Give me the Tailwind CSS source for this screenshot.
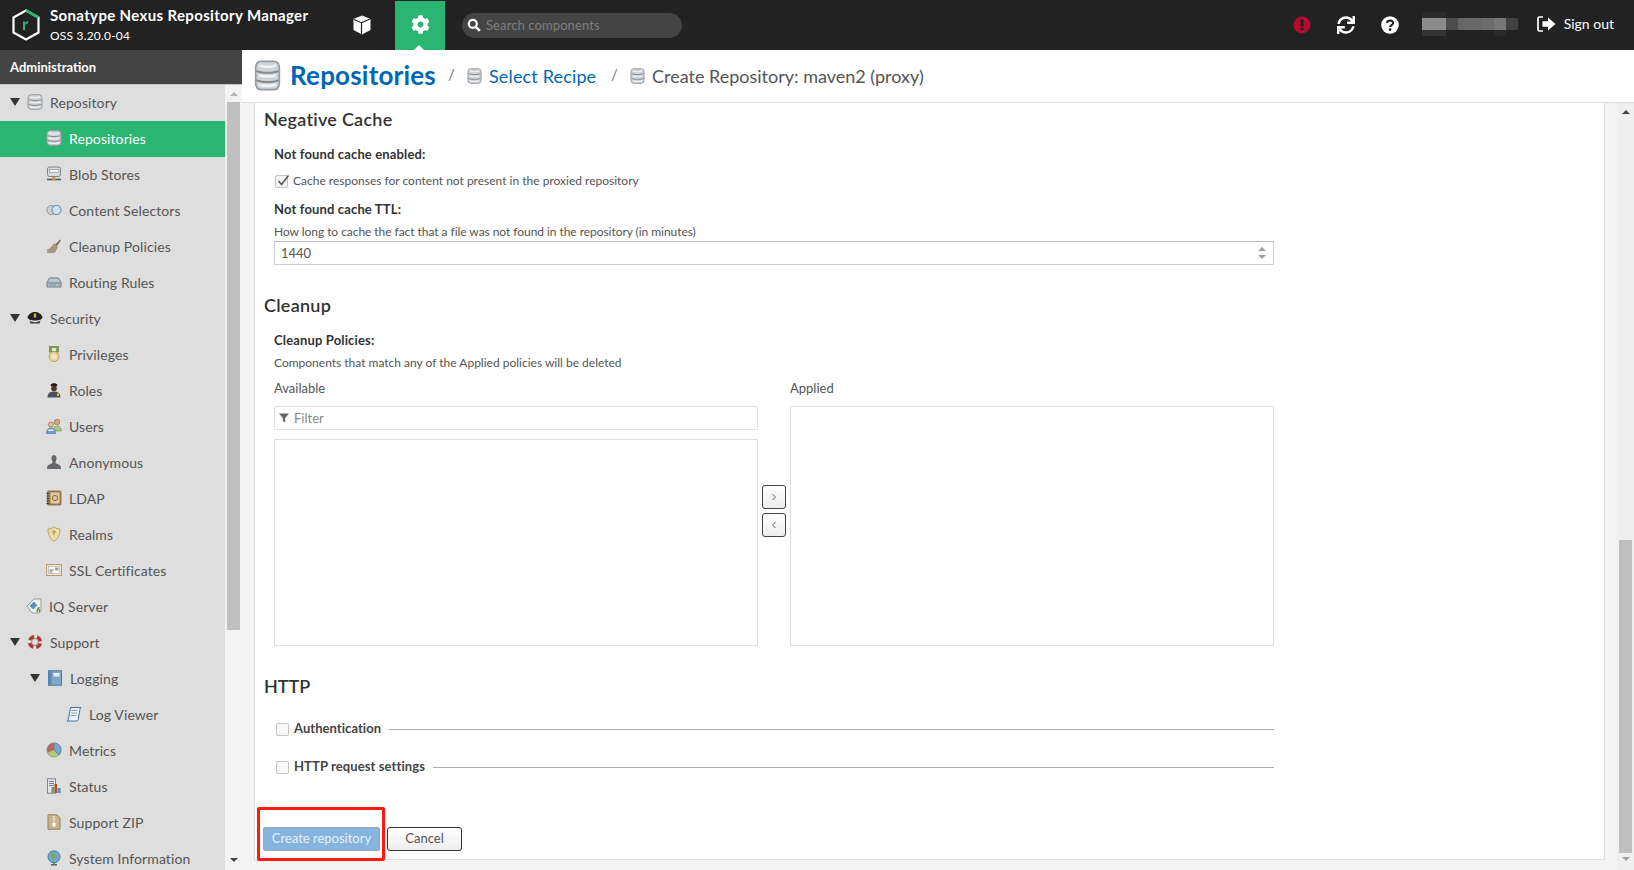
<!DOCTYPE html>
<html>
<head>
<meta charset="utf-8">
<script src="https://cdn.jsdelivr.net/npm/@tailwindcss/browser@4"></script>
</head>
<body class="m-0 font-['Lato','Liberation_Sans',sans-serif] bg-white">
<svg class="hidden">
  <symbol id="db" viewBox="0 0 16 16" preserveAspectRatio="none"><rect x="1" y=".7" width="14" height="14.600" rx="3" fill="#cfd3d6" stroke="#969ca2"/><path d="M1.500 5.600c2.500 1.300 10.500 1.300 13 0M1.500 10.400c2.500 1.300 10.500 1.300 13 0" stroke="#858b91" fill="none"/><path d="M3 2.800c2.500 1 7.500 1 10 0M3 7.800c2.500 1 7.500 1 10 0M3 12.600c2.500 1 7.500 1 10 0" stroke="#f2f3f4" stroke-width="1.300" fill="none"/></symbol>
  <symbol id="blob" viewBox="0 0 16 16"><rect x="1.500" y="1" width="13" height="9.500" rx="2" fill="#d8dadc" stroke="#7d8287"/><rect x="3.500" y="3.500" width="9" height="3" fill="#f3f3f3" stroke="#8a8f94" stroke-width=".6"/><path d="M1 13.500h14" stroke="#55585c" stroke-width="1.600"/><rect x="6.500" y="11" width="3" height="3.500" fill="#c79a4a"/></symbol>
  <symbol id="sel" viewBox="0 0 16 16"><circle cx="5.500" cy="8" r="4.600" fill="#cfd2d5" stroke="#8e9398"/><circle cx="10.500" cy="8" r="4.600" fill="#cfe0ee" stroke="#5f87ad"/></symbol>
  <symbol id="broom" viewBox="0 0 16 16"><path d="M9 7l5-5.500 1 1L10.500 8.500z" fill="#7a6a52"/><path d="M8.500 5.500l3 3-2.500 5.500c-2 .5-6 .8-8 .2 1.500-.7 2.500-1.200 2.700-2-1 .2-2 .2-2.700-.2 1.800-.5 3.500-1.500 4.500-3z" fill="#a8977a" stroke="#85755c" stroke-width=".5"/></symbol>
  <symbol id="router" viewBox="0 0 16 16"><path d="M3.500 4h9L15 8.500v4.500H1V8.500z" fill="#b9c6d2" stroke="#6f7d8a"/><path d="M1.500 9h13" stroke="#6f7d8a"/><path d="M3 11h7" stroke="#5c6670" stroke-dasharray="1 .6" stroke-width="1.200"/><path d="M12 11h2" stroke="#6bb04a" stroke-width="1.200"/></symbol>
  <symbol id="cap" viewBox="0 0 16 16"><path d="M.5 7c1-3 4.500-5 7.500-5s6.500 2 7.500 5c0 2.500-3.500 3.500-7.500 3.500S.5 9.500.5 7z" fill="#222"/><path d="M2.500 10.500c3 2.200 8 2.200 11 0l-1 3H3.500z" fill="#3a3a3a"/><rect x="6.800" y="3.500" width="2.400" height="4" fill="#d9b44a"/></symbol>
  <symbol id="medal" viewBox="0 0 16 16"><rect x="3.500" y="0.500" width="9" height="5.500" fill="#7ea55c" stroke="#5f8243" stroke-width=".7"/><rect x="6" y="2" width="4" height="3" fill="#dfe8c8"/><circle cx="8" cy="10.500" r="5" fill="#e6d59a" stroke="#b9a25e"/><circle cx="8" cy="10.500" r="2.500" fill="#f1e7bf"/></symbol>
  <symbol id="officer" viewBox="0 0 16 16"><path d="M4.500 3c1-2.500 6-2.500 7 0l-1 1.500h-5z" fill="#1d1d1d"/><circle cx="8" cy="6.500" r="2.800" fill="#4f3524"/><path d="M1.500 15.500c0-4.500 3-6 6.500-6s6.500 1.500 6.500 6z" fill="#4c5056"/><rect x="11" y="11.500" width="2" height="2.500" fill="#e4c24f"/></symbol>
  <symbol id="users" viewBox="0 0 16 16"><circle cx="11" cy="4" r="2.800" fill="#d7a679" stroke="#8c5f3b" stroke-width=".6"/><path d="M7 13c0-3.500 2-5 4-5s4.500 1.500 4.500 5z" fill="#a9c58c" stroke="#71914f" stroke-width=".6"/><circle cx="5" cy="6.500" r="2.600" fill="#e4b88f" stroke="#8c5f3b" stroke-width=".6"/><path d="M.5 15.500c0-4 2-5.500 4.500-5.500s4.500 1.500 4.500 5.500z" fill="#6f9fcb" stroke="#3f6f9f" stroke-width=".6"/><rect x="2.500" y="11.500" width="5" height="1.500" fill="#f0f4f8"/></symbol>
  <symbol id="anon" viewBox="0 0 16 16"><path d="M5.500 4c0-4 5-4 5 0 0 2-1 3.500-1 5l4 2c1 .6 1.500 2 1.500 4H1c0-2 .5-3.400 1.500-4l4-2c0-1.500-1-3-1-5z" fill="#66686b"/></symbol>
  <symbol id="book" viewBox="0 0 16 16"><rect x="1.500" y="1" width="13.500" height="14" rx="1" fill="#a98250" stroke="#72542d" stroke-width=".7"/><rect x="4.500" y="2.500" width="9" height="11" fill="#dcc8a4"/><circle cx="9" cy="8" r="2.600" fill="none" stroke="#8a6a3c"/><path d="M.5 3.500h3M.5 6h3M.5 8.500h3M.5 11h3M.5 13.500h3" stroke="#3f3f3f"/></symbol>
  <symbol id="shield" viewBox="0 0 16 16"><path d="M8 .8c1.800 1.400 3.800 2 6 2.200 0 5.500-1.500 9.500-6 12.200C3.500 12.500 2 8.500 2 3c2.200-.2 4.200-.8 6-2.200z" fill="#ecdca9" stroke="#bba465"/><path d="M8 4v5m-2-2.500c0-1 4-1 4 0" stroke="#a98f49" fill="none"/></symbol>
  <symbol id="cert" viewBox="0 0 16 16"><rect x=".5" y="2.500" width="15" height="11" fill="#efe6d0" stroke="#b39d72"/><rect x="2.500" y="4.500" width="11" height="7" fill="#f9f7f1" stroke="#9d9d9d" stroke-width=".5"/><path d="M3.500 8h4M3.500 10h3" stroke="#777"/><rect x="9" y="5.500" width="3.500" height="3" fill="#8fa9c4"/></symbol>
  <symbol id="tag" viewBox="0 0 16 16"><path d="M1 8l7-7h7v12l-2 2H6z" fill="#eef0ec" stroke="#9a9d97"/><rect x="4.500" y="5" width="6" height="5" transform="rotate(-45 7.500 7.500)" fill="#5f8fc0"/><path d="M11 14l2-5" stroke="#7b9d48" stroke-width="2"/><path d="M13.500 14v-3" stroke="#c7663a"/></symbol>
  <symbol id="buoy" viewBox="0 0 16 16"><circle cx="8" cy="8" r="7.500" fill="#c9c9c9"/><circle cx="8" cy="8" r="5.300" fill="none" stroke="#a63a34" stroke-width="3.600"/><circle cx="8" cy="8" r="5.300" fill="none" stroke="#ece8e4" stroke-width="3.600" stroke-dasharray="2.800 5.530" stroke-dashoffset="1.400"/><circle cx="8" cy="8" r="3.300" fill="#dedede" stroke="#8f5a56" stroke-width=".5"/></symbol>
  <symbol id="logbook" viewBox="0 0 16 16"><rect x="1.500" y=".8" width="13" height="14.400" fill="#7ea7cb" stroke="#4b7aa4"/><rect x="1.500" y=".8" width="3" height="14.400" fill="#5c89b2"/><rect x="6.500" y="3" width="6" height="3.500" fill="#e7eff6"/></symbol>
  <symbol id="scroll" viewBox="0 0 16 16"><path d="M4.500 1.500h10.500c-1 1-1.200 2-1.300 3l-1.500 9c-.2 1-1 1.500-2 1.500H1c1-.5 1.300-1.200 1.500-2z" fill="#eef3f7" stroke="#3f739e"/><path d="M5.500 4.500h6M5 7h6M4.600 9.500h6" stroke="#6a8aa5" stroke-width=".8"/></symbol>
  <symbol id="pie" viewBox="0 0 16 16"><circle cx="8" cy="8" r="7" fill="#b3c77f" stroke="#7d8f52" stroke-width=".7"/><path d="M8 8V1A7 7 0 0 0 1.500 10.500z" fill="#b9665c"/><path d="M8 8V1a7 7 0 0 1 5 12z" fill="#79a7c9" stroke="#4a7698" stroke-width=".6"/></symbol>
  <symbol id="status" viewBox="0 0 16 16"><rect x="1.500" y=".8" width="8" height="14.400" fill="#e3e5e8" stroke="#81878d"/><path d="M3 3.500h5M3 5.500h5M3 7.500h5" stroke="#7a8087"/><rect x="5.500" y="9" width="2.500" height="6" fill="#6ba04a"/><rect x="8.500" y="6" width="2.500" height="9" fill="#b0473d"/><rect x="11.500" y="10" width="3" height="5" fill="#4e8cbc"/></symbol>
  <symbol id="zip" viewBox="0 0 16 16"><path d="M2 .8h9l3 3v11.400H2z" fill="#c9b389" stroke="#94805a"/><path d="M8 2v7" stroke="#fff" stroke-width="1.400" stroke-dasharray="1.300 .8"/><rect x="6.500" y="9" width="3" height="3.500" fill="#fff"/></symbol>
  <symbol id="globe" viewBox="0 0 16 16"><circle cx="8" cy="6.800" r="6" fill="#6fa7cf" stroke="#4a7da3"/><path d="M5 2.500c2-1 4 .5 3.500 2-.5 1 1.500 1 2 2.500.4 1.500-1 3-2.500 3-.5-1.500-2-2-2.500-3.500C5 5.500 4 4 5 2.500z" fill="#7eab52"/><path d="M5 14.800h6" stroke="#63676b" stroke-width="1.600"/><path d="M8 12.800v2" stroke="#63676b" stroke-width="1.500"/></symbol>
  <symbol id="tri" viewBox="0 0 10 8"><path d="M0 0h10L5 8z" fill="#333"/></symbol>
</svg>

<div class="w-[1634px] h-[870px] overflow-hidden flex flex-col">
  <!-- top bar -->
  <header class="h-[50px] shrink-0 bg-[#222222] flex items-center relative">
    <svg class="ml-[12px] w-[28px] h-[32px] shrink-0" viewBox="0 0 28 32"><path d="M14 1.500L26.500 8.500V23.500L14 30.500L1.500 23.500V8.500z" fill="none" stroke="#fff" stroke-width="2.200"/><path d="M14 1.500L26.500 8.500" stroke="#29b473" stroke-width="2.600" fill="none"/><path d="M11 21v-8.500h2v1.500c.8-1.200 1.800-1.700 3.200-1.700v2.200c-1.800 0-3.200.5-3.200 2.500v4z" fill="#29b473"/></svg>
    <div class="ml-[10px] -mt-[2px] w-[302px] shrink-0 flex flex-col">
      <div class="text-white text-[15px] font-bold leading-[18px] tracking-[0.35px] whitespace-nowrap">Sonatype Nexus Repository Manager</div>
      <div class="text-white text-[12px] leading-[14px] mt-[5px] tracking-[0.2px]">OSS 3.20.0-04</div>
    </div>
    <svg class="w-[20px] h-[20px] shrink-0 -mt-px" viewBox="0 0 20 20"><path d="M10 .5l8.500 3.500v11L10 19.500 1.500 15V4z" fill="#fff"/><path d="M2 4.500l7.500 3.300V19M9.500 7.800L18 4" stroke="#222" stroke-width="1.200" fill="none"/></svg>
    <div class="ml-[23px] w-[50px] h-[49px] mt-px bg-[#2ab573] flex items-center justify-center relative shrink-0">
      <svg class="w-[19px] h-[19px] -mt-[2px]" viewBox="0 0 512 512"><path fill="#fff" d="M487.4 315.700l-42.600-24.600c4.300-23.200 4.300-47 0-70.200l42.600-24.600c4.900-2.800 7.100-8.600 5.500-14-11.100-35.600-30-67.800-54.700-94.600-3.800-4.100-10-5.100-14.800-2.300L380.800 110c-17.900-15.400-38.500-27.300-60.800-35.100V25.800c0-5.600-3.900-10.500-9.400-11.700-36.700-8.200-74.300-7.800-109.200 0-5.500 1.200-9.400 6.100-9.400 11.700V75c-22.200 7.900-42.800 19.800-60.800 35.100L88.700 85.500c-4.900-2.800-11-1.900-14.800 2.300-24.700 26.700-43.600 58.900-54.700 94.600-1.700 5.400.6 11.200 5.500 14L67.300 221c-4.300 23.200-4.300 47 0 70.200l-42.600 24.600c-4.900 2.800-7.100 8.600-5.500 14 11.100 35.600 30 67.800 54.700 94.600 3.800 4.100 10 5.100 14.800 2.300l42.600-24.600c17.900 15.400 38.500 27.300 60.800 35.100v49.200c0 5.600 3.900 10.500 9.400 11.700 36.700 8.200 74.300 7.800 109.200 0 5.500-1.200 9.400-6.100 9.400-11.700v-49.200c22.200-7.900 42.800-19.800 60.800-35.100l42.600 24.600c4.900 2.800 11 1.900 14.800-2.300 24.700-26.700 43.600-58.900 54.700-94.600 1.500-5.500-.7-11.300-5.600-14.100zM256 336c-44.100 0-80-35.900-80-80s35.900-80 80-80 80 35.900 80 80-35.900 80-80 80z"/></svg>
      <div class="absolute bottom-0 left-[19px] w-0 h-0 border-l-[5px] border-r-[5px] border-b-[5px] border-l-transparent border-r-transparent border-b-white"></div>
    </div>
    <div class="ml-[17px] w-[220px] h-[25px] rounded-full bg-[#444444] flex items-center shrink-0">
      <svg class="ml-[5px] w-[14px] h-[14px]" viewBox="0 0 14 14"><circle cx="5.800" cy="5.800" r="4" fill="none" stroke="#fff" stroke-width="2.200"/><path d="M8.800 8.800l4 4" stroke="#fff" stroke-width="2.600"/></svg>
      <span class="ml-[5px] pt-[2px] text-[13px] text-[#7d7d7d] tracking-[0.1px]">Search components</span>
    </div>
    <div class="ml-auto flex items-center">
      <svg class="w-[18px] h-[18px]" viewBox="0 0 18 18"><circle cx="9" cy="9" r="8.500" fill="#b8082e"/><rect x="7.400" y="3.500" width="3.200" height="7" rx=".8" fill="#222"/><circle cx="9" cy="13" r="1.700" fill="#222"/></svg>
      <svg class="ml-[26px] w-[18px] h-[18px]" viewBox="0 0 512 512"><path fill="#fff" d="M440.650 12.570l4 82.770A247.160 247.160 0 0 0 255.830 8C134.730 8 33.910 94.920 12.290 209.820A12 12 0 0 0 24.090 224h49.050a12 12 0 0 0 11.670-9.260 175.910 175.910 0 0 1 317-56.940l-101.460-4.860a12 12 0 0 0-12.570 12v47.410a12 12 0 0 0 12 12H500a12 12 0 0 0 12-12V12a12 12 0 0 0-12-12h-47.370a12 12 0 0 0-11.980 12.570zM255.830 432a175.610 175.610 0 0 1-146-77.800l101.800 4.870a12 12 0 0 0 12.570-12v-47.400a12 12 0 0 0-12-12H12a12 12 0 0 0-12 12V500a12 12 0 0 0 12 12h47.350a12 12 0 0 0 12-12.600l-4.150-82.570A247.170 247.170 0 0 0 255.830 504c121.110 0 221.930-86.920 243.550-201.820a12 12 0 0 0-11.800-14.180h-49.050a12 12 0 0 0-11.670 9.260A175.860 175.860 0 0 1 255.830 432z"/></svg>
      <svg class="ml-[26px] w-[18px] h-[18px]" viewBox="0 0 18 18"><circle cx="9" cy="9" r="8.800" fill="#fff"/><path d="M5.900 6.900c.2-1.700 1.500-2.500 3.100-2.500 1.700 0 3.100 1 3.100 2.500 0 2.200-3 2.100-3 4.200" fill="none" stroke="#222" stroke-width="2"/><circle cx="9.100" cy="13.600" r="1.300" fill="#222"/></svg>
      <div class="ml-[23px] w-[96px] h-[26px] flex flex-col">
        <div class="h-[6px] w-[24px] bg-[#2b2b2b]"></div>
        <div class="h-[12px] flex">
          <div class="w-[24px] bg-[#8a8a8a]"></div><div class="w-[12px] bg-[#4d4d4d]"></div><div class="w-[12px] bg-[#666666]"></div><div class="w-[12px] bg-[#686868]"></div><div class="w-[12px] bg-[#6c6c6c]"></div><div class="w-[12px] bg-[#777777]"></div><div class="w-[12px] bg-[#414141]"></div>
        </div>
        <div class="h-[6px] flex"><div class="w-[24px] bg-[#333333]"></div><div class="w-[48px]"></div><div class="w-[12px] bg-[#2b2b2b]"></div></div>
      </div>
      <svg class="ml-[19px] -mt-[2px] w-[19px] h-[16px]" viewBox="0 0 19 16"><path d="M6 1H2.500C1.500 1 1 1.600 1 2.500v11c0 .9.500 1.500 1.500 1.500H6" fill="none" stroke="#fff" stroke-width="1.700"/><path d="M5.500 5.200h5.500V1.500L18.500 8 11 14.500v-3.700H5.500z" fill="#fff"/></svg>
      <span class="ml-[8px] -mt-[4px] mr-[20px] text-white text-[14px]">Sign out</span>
    </div>
  </header>

  <div class="flex flex-1 min-h-0">
    <!-- sidebar -->
    <aside class="w-[242px] shrink-0 flex flex-col bg-[#f3f3f3]">
      <div class="h-[35px] shrink-0 bg-[#444444] border-b border-[#c4c4c4] pl-[10px] pt-[2px] flex items-center text-white text-[13px] font-bold">Administration</div>
      <div class="flex flex-1 min-h-0">
        <nav class="w-[225px] shrink-0 bg-[#dedede] text-[14px] text-[#555555] tracking-[0.1px] overflow-hidden">
          <div class="h-9 pb-[2px] flex items-center pl-[10px]"><svg class="w-[10px] h-[8px]"><use href="#tri"/></svg><svg class="ml-[7px] w-4 h-4"><use href="#db"/></svg><span class="ml-[7px]">Repository</span></div>
          <div class="h-9 pb-[2px] flex items-center pl-[46px] bg-[#2ab573] text-white"><svg class="w-4 h-4"><use href="#db"/></svg><span class="ml-[7px]">Repositories</span></div>
          <div class="h-9 pb-[2px] flex items-center pl-[46px]"><svg class="w-4 h-4"><use href="#blob"/></svg><span class="ml-[7px]">Blob Stores</span></div>
          <div class="h-9 pb-[2px] flex items-center pl-[46px]"><svg class="w-4 h-4"><use href="#sel"/></svg><span class="ml-[7px]">Content Selectors</span></div>
          <div class="h-9 pb-[2px] flex items-center pl-[46px]"><svg class="w-4 h-4"><use href="#broom"/></svg><span class="ml-[7px]">Cleanup Policies</span></div>
          <div class="h-9 pb-[2px] flex items-center pl-[46px]"><svg class="w-4 h-4"><use href="#router"/></svg><span class="ml-[7px]">Routing Rules</span></div>
          <div class="h-9 pb-[2px] flex items-center pl-[10px]"><svg class="w-[10px] h-[8px]"><use href="#tri"/></svg><svg class="ml-[7px] w-4 h-4"><use href="#cap"/></svg><span class="ml-[7px]">Security</span></div>
          <div class="h-9 pb-[2px] flex items-center pl-[46px]"><svg class="w-4 h-4"><use href="#medal"/></svg><span class="ml-[7px]">Privileges</span></div>
          <div class="h-9 pb-[2px] flex items-center pl-[46px]"><svg class="w-4 h-4"><use href="#officer"/></svg><span class="ml-[7px]">Roles</span></div>
          <div class="h-9 pb-[2px] flex items-center pl-[46px]"><svg class="w-4 h-4"><use href="#users"/></svg><span class="ml-[7px]">Users</span></div>
          <div class="h-9 pb-[2px] flex items-center pl-[46px]"><svg class="w-4 h-4"><use href="#anon"/></svg><span class="ml-[7px]">Anonymous</span></div>
          <div class="h-9 pb-[2px] flex items-center pl-[46px]"><svg class="w-4 h-4"><use href="#book"/></svg><span class="ml-[7px]">LDAP</span></div>
          <div class="h-9 pb-[2px] flex items-center pl-[46px]"><svg class="w-4 h-4"><use href="#shield"/></svg><span class="ml-[7px]">Realms</span></div>
          <div class="h-9 pb-[2px] flex items-center pl-[46px]"><svg class="w-4 h-4"><use href="#cert"/></svg><span class="ml-[7px]">SSL Certificates</span></div>
          <div class="h-9 pb-[2px] flex items-center pl-[26px]"><svg class="w-4 h-4"><use href="#tag"/></svg><span class="ml-[7px]">IQ Server</span></div>
          <div class="h-9 pb-[2px] flex items-center pl-[10px]"><svg class="w-[10px] h-[8px]"><use href="#tri"/></svg><svg class="ml-[7px] w-4 h-4"><use href="#buoy"/></svg><span class="ml-[7px]">Support</span></div>
          <div class="h-9 pb-[2px] flex items-center pl-[30px]"><svg class="w-[10px] h-[8px]"><use href="#tri"/></svg><svg class="ml-[7px] w-4 h-4"><use href="#logbook"/></svg><span class="ml-[7px]">Logging</span></div>
          <div class="h-9 pb-[2px] flex items-center pl-[66px]"><svg class="w-4 h-4"><use href="#scroll"/></svg><span class="ml-[7px]">Log Viewer</span></div>
          <div class="h-9 pb-[2px] flex items-center pl-[46px]"><svg class="w-4 h-4"><use href="#pie"/></svg><span class="ml-[7px]">Metrics</span></div>
          <div class="h-9 pb-[2px] flex items-center pl-[46px]"><svg class="w-4 h-4"><use href="#status"/></svg><span class="ml-[7px]">Status</span></div>
          <div class="h-9 pb-[2px] flex items-center pl-[46px]"><svg class="w-4 h-4"><use href="#zip"/></svg><span class="ml-[7px]">Support ZIP</span></div>
          <div class="h-9 pb-[2px] flex items-center pl-[46px]"><svg class="w-4 h-4"><use href="#globe"/></svg><span class="ml-[7px]">System Information</span></div>
        </nav>
        <div class="w-[17px] shrink-0 flex flex-col items-center pl-[2px] pr-[2px]">
          <div class="h-[17px] flex items-center justify-center"><div class="w-0 h-0 border-l-[4px] border-r-[4px] border-b-[4px] border-l-transparent border-r-transparent border-b-[#b5b5b5]"></div></div>
          <div class="w-[13px] h-[528px] bg-[#bfbfbf]"></div>
          <div class="mt-auto h-[20px] flex items-center justify-center"><div class="w-0 h-0 border-l-[4px] border-r-[4px] border-t-[4px] border-l-transparent border-r-transparent border-t-[#444444]"></div></div>
        </div>
      </div>
    </aside>

    <!-- main -->
    <main class="flex-1 min-w-0 flex flex-col">
      <div class="h-[53px] shrink-0 bg-white border-b border-[#dddddd] flex items-center">
        <svg class="ml-[12px] w-[27px] h-[31px] -mt-[1px]"><use href="#db"/></svg>
        <span class="ml-[9px] text-[26px] font-bold text-[#0067b6] tracking-[0.2px] w-[158px] whitespace-nowrap -mt-[1px]">Repositories</span>
        <span class="text-[15px] text-[#777777] w-[19px] -mt-[4px]">/</span>
        <svg class="w-[15px] h-[16px]"><use href="#db"/></svg>
        <span class="ml-[7px] text-[18px] text-[#0067b6] tracking-[0.15px] w-[122px] whitespace-nowrap">Select Recipe</span>
        <span class="text-[15px] text-[#777777] w-[19px] -mt-[4px]">/</span>
        <svg class="w-[15px] h-[16px]"><use href="#db"/></svg>
        <span class="ml-[7px] text-[18px] text-[#555555] whitespace-nowrap">Create Repository: maven2 (proxy)</span>
      </div>
      <div class="flex-1 min-h-0 bg-[#f3f3f3] flex pl-[12px]">
        <section class="w-[1351px] h-[757px] shrink-0 bg-white border-l border-r border-b border-[#dddddd] pl-[9px] text-[#444444]">
          <h2 class="mt-[7px] h-[20px] pb-[2px] flex items-center text-[18px] font-semibold text-[#333333] tracking-[0.25px]">Negative Cache</h2>
          <div class="ml-[10px] w-[1000px]">
            <div class="mt-[16px] h-[16px] pt-[2px] flex items-center text-[13px] font-bold text-[#333333] tracking-[0.15px]">Not found cache enabled:</div>
            <div class="mt-[11px] h-[16px] flex items-center text-[12px] text-[#555555]">
              <div class="ml-[1px] w-[13px] h-[13px] border border-[#c4c4c4] rounded-[2px] bg-[#f5f5f5] relative">
                <svg class="absolute left-0 -top-[2px] w-[14px] h-[14px]" viewBox="0 0 14 14"><path d="M2.500 7l3 3.500L12.500 1.500" fill="none" stroke="#5a5a5a" stroke-width="1.600"/></svg>
              </div>
              <span class="ml-[5px]">Cache responses for content not present in the proxied repository</span>
            </div>
            <div class="mt-[12px] h-[16px] pt-[2px] flex items-center text-[13px] font-bold text-[#333333] tracking-[0.15px]">Not found cache TTL:</div>
            <div class="mt-[7px] h-[16px] flex items-center text-[12px] text-[#555555] tracking-[-0.05px]">How long to cache the fact that a file was not found in the repository (in minutes)</div>
            <div class="mt-[1px] h-[24px] border border-[#cfcfcf] border-t-[#b9b9b9] flex items-center pl-[6px] text-[13px] text-[#555555]">
              <span class="pt-[2px]">1440</span>
              <div class="ml-auto mr-[7px] flex flex-col gap-[4px]">
                <div class="w-0 h-0 border-l-[4px] border-r-[4px] border-b-[4px] border-l-transparent border-r-transparent border-b-[#a0a0a0]"></div>
                <div class="w-0 h-0 border-l-[4px] border-r-[4px] border-t-[4px] border-l-transparent border-r-transparent border-t-[#a0a0a0]"></div>
              </div>
            </div>
          </div>
          <h2 class="mt-[31px] h-[20px] pb-[1px] flex items-center text-[18px] font-semibold text-[#333333] tracking-[0.25px]">Cleanup</h2>
          <div class="ml-[10px] w-[1000px]">
            <div class="mt-[16px] h-[16px] pt-[2px] flex items-center text-[13px] font-bold text-[#333333] tracking-[0.15px]">Cleanup Policies:</div>
            <div class="mt-[7px] h-[16px] flex items-center text-[12px] text-[#555555]">Components that match any of the Applied policies will be deleted</div>
            <div class="mt-[9px] flex h-[266px]">
              <div class="w-[484px] flex flex-col">
                <div class="h-[16px] pt-[2px] flex items-center text-[13px] text-[#555555]">Available</div>
                <div class="mt-[10px] h-[24px] border border-[#dddddd] rounded-[2px] flex items-center pl-[4px] text-[13px] text-[#888888]">
                  <svg class="w-[10px] h-[10px]" viewBox="0 0 10 10"><path d="M0 .5h10L6.200 5v4.500L3.800 8V5z" fill="#666666"/></svg>
                  <span class="ml-[5px] pt-[2px]">Filter</span>
                </div>
                <div class="mt-[9px] flex-1 border border-[#dddddd]"></div>
              </div>
              <div class="w-[32px] flex flex-col items-center pt-[105px]">
                <button class="w-[24px] h-[24px] border border-[#444444] rounded-[3px] bg-gradient-to-b from-white to-[#eeeeee] flex items-center justify-center"><svg class="w-[8px] h-[8px]" viewBox="0 0 8 8"><path d="M2.500 1l3 3-3 3" fill="none" stroke="#666666"/></svg></button>
                <button class="mt-[4px] w-[24px] h-[24px] border border-[#444444] rounded-[3px] bg-gradient-to-b from-white to-[#eeeeee] flex items-center justify-center"><svg class="w-[8px] h-[8px]" viewBox="0 0 8 8"><path d="M5.500 1l-3 3 3 3" fill="none" stroke="#666666"/></svg></button>
              </div>
              <div class="w-[484px] flex flex-col">
                <div class="h-[16px] pt-[2px] flex items-center text-[13px] text-[#555555]">Applied</div>
                <div class="mt-[10px] flex-1 border border-[#dddddd]"></div>
              </div>
            </div>
          </div>
          <h2 class="mt-[31px] h-[20px] pb-[2px] flex items-center text-[18px] font-semibold text-[#333333]">HTTP</h2>
          <div class="ml-[12px] w-[998px]">
            <div class="mt-[24px] h-[16px] flex items-center text-[13px] font-bold text-[#444444] tracking-[0.05px]">
              <div class="w-[13px] h-[13px] border border-[#c4c4c4] rounded-[2px] bg-[#f8f8f8]"></div>
              <span class="ml-[5px] w-[95px] whitespace-nowrap">Authentication</span>
              <div class="flex-1 h-px bg-[#aaaaaa]"></div>
            </div>
            <div class="mt-[22px] h-[16px] flex items-center text-[13px] font-bold text-[#444444] tracking-[0.1px]">
              <div class="w-[13px] h-[13px] border border-[#c4c4c4] rounded-[2px] bg-[#f8f8f8]"></div>
              <span class="ml-[5px] w-[139px] whitespace-nowrap">HTTP request settings</span>
              <div class="flex-1 h-px bg-[#aaaaaa]"></div>
            </div>
          </div>
          <div class="mt-[52px] -ml-[1px] h-[24px] flex relative">
            <button class="w-[117px] h-[24px] border border-[#9aa7b3] rounded-[2px] bg-[#85b5de] text-[13px] text-[#e6eff7]">Create repository</button>
            <button class="ml-[7px] w-[75px] h-[24px] border border-[#333333] rounded-[3px] bg-gradient-to-b from-white to-[#eeeeee] text-[13px] text-[#555555]">Cancel</button>
            <div class="absolute -left-[6px] -top-[20px] w-[128px] h-[54px] border-[3px] border-[#ff1a10] rounded-[2px]"></div>
          </div>
        </section>
        <div class="flex-1 flex">
          <div class="w-[12px]"></div>
          <div class="flex-1 bg-[#efefef] flex flex-col items-center pl-[2px] pr-[2px]">
            <div class="h-[18px] flex items-center justify-center"><div class="w-0 h-0 border-l-[4px] border-r-[4px] border-b-[4px] border-l-transparent border-r-transparent border-b-[#444444]"></div></div>
            <div class="w-[13px] h-[313px] mt-[419px] bg-[#bfbfbf]"></div>
            <div class="mt-[4px] w-0 h-0 border-l-[4px] border-r-[4px] border-t-[4px] border-l-transparent border-r-transparent border-t-[#a0a0a0]"></div>
          </div>
        </div>
      </div>
    </main>
  </div>
</div>
</body>
</html>
